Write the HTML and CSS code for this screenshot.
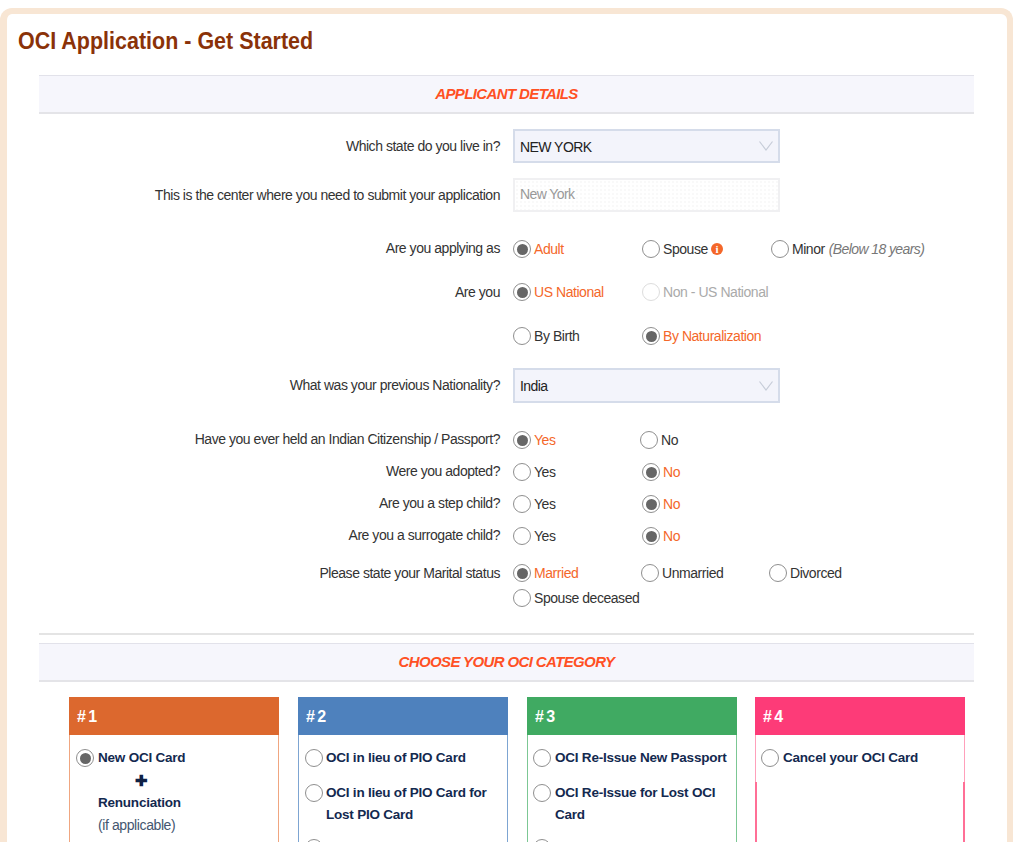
FILE: index.html
```html
<!DOCTYPE html>
<html lang="en">
<head>
<meta charset="utf-8">
<title>OCI Application - Get Started</title>
<link rel="stylesheet" href="styles.css">
</head>
<body>
<main class="shell">
  <h1 class="title"><span>OCI Application - Get Started</span></h1>
  <section class="content">
    <h2 class="bar">APPLICANT DETAILS</h2>
    <div class="form">
      <div class="row h-select flat"><div class="label">Which state do you live in?</div><div class="select low"><span>NEW YORK</span><svg class="chev" viewBox="0 0 14 10"><path d="M.5.5 7 9 13.500.5"/></svg></div></div>
      <div class="row h-center flat"><div class="label">This is the center where you need to submit your application</div><div class="readonly">New York</div></div>
      <div class="row h-as"><div class="label">Are you applying as</div><div class="opts">
        <label class="opt on"><i class="radio"></i>Adult</label>
        <label class="opt"><i class="radio"></i>Spouse <b class="info">i</b></label>
        <label class="opt"><i class="radio"></i>Minor <em class="note">(Below 18 years)</em></label>
      </div></div>
      <div class="row h-nat flat"><div class="label">Are you</div><div class="opts">
        <label class="opt on"><i class="radio"></i>US National</label>
        <label class="opt off"><i class="radio"></i>Non - US National</label>
      </div></div>
      <div class="row h-nat2"><div class="label"></div><div class="opts">
        <label class="opt"><i class="radio"></i>By Birth</label>
        <label class="opt on"><i class="radio"></i>By Naturalization</label>
      </div></div>
      <div class="row h-prev"><div class="label">What was your previous Nationality?</div><div class="select"><span>India</span><svg class="chev" viewBox="0 0 14 10"><path d="M.5.5 7 9 13.500.5"/></svg></div></div>
      <div class="row h-q1"><div class="label">Have you ever held an Indian Citizenship / Passport?</div><div class="opts">
        <label class="opt on w127"><i class="radio"></i>Yes</label>
        <label class="opt"><i class="radio"></i>No</label>
      </div></div>
      <div class="row h-q"><div class="label">Were you adopted?</div><div class="opts">
        <label class="opt"><i class="radio"></i>Yes</label>
        <label class="opt on"><i class="radio"></i>No</label>
      </div></div>
      <div class="row h-q"><div class="label">Are you a step child?</div><div class="opts">
        <label class="opt"><i class="radio"></i>Yes</label>
        <label class="opt on"><i class="radio"></i>No</label>
      </div></div>
      <div class="row h-q"><div class="label">Are you a surrogate child?</div><div class="opts">
        <label class="opt"><i class="radio"></i>Yes</label>
        <label class="opt on"><i class="radio"></i>No</label>
      </div></div>
      <div class="row h-mar flat"><div class="label">Please state your Marital status</div><div class="opts">
        <label class="opt on w128"><i class="radio"></i>Married</label>
        <label class="opt w128"><i class="radio"></i>Unmarried</label>
        <label class="opt"><i class="radio"></i>Divorced</label>
      </div></div>
      <div class="row h-mar2"><div class="label"></div><div class="opts">
        <label class="opt wide"><i class="radio"></i>Spouse deceased</label>
      </div></div>
    </div>
    <hr class="rule">
    <h2 class="bar">CHOOSE YOUR OCI CATEGORY</h2>
    <div class="cards">
      <article class="card c1">
        <header># 1</header>
        <div class="items">
          <label class="item on"><i class="radio"></i><span><strong>New OCI Card</strong><strong class="plus">✚</strong><strong>Renunciation</strong><small>(if applicable)</small></span></label>
        </div>
      </article>
      <article class="card c2">
        <header># 2</header>
        <div class="items">
          <label class="item"><i class="radio"></i><span><strong>OCI in lieu of PIO Card</strong></span></label>
          <label class="item"><i class="radio"></i><span><strong>OCI in lieu of PIO Card for Lost PIO Card</strong></span></label>
          <label class="item"><i class="radio"></i></label>
        </div>
      </article>
      <article class="card c3">
        <header># 3</header>
        <div class="items">
          <label class="item"><i class="radio"></i><span><strong>OCI Re-Issue New Passport</strong></span></label>
          <label class="item"><i class="radio"></i><span><strong>OCI Re-Issue for Lost OCI Card</strong></span></label>
          <label class="item"><i class="radio"></i></label>
        </div>
      </article>
      <article class="card c4">
        <header># 4</header>
        <div class="items">
          <label class="item"><i class="radio"></i><span><strong>Cancel your OCI Card</strong></span></label>
        </div>
      </article>
    </div>
  </section>
</main>
</body>
</html>
```

FILE: styles.css
```css
* { box-sizing: border-box; }
html, body { margin: 0; height: 842px; overflow: hidden; background: #fff; }
body { font-family: "Liberation Sans", Arial, sans-serif; font-size: 14px; color: #333; }
.shell {
  margin: 8px 11px 0 0;
  height: 834px;
  border: 6px solid #f8e6d4;
  border-left-width: 7px;
  border-bottom: 0;
  border-radius: 12px 12px 0 0;
  background: #fff;
  overflow: hidden;
}
.title {
  margin: 0;
  padding: 12px 0 0 11px;
  height: 61px;
  font-size: 24px;
  line-height: 30px;
  font-weight: 700;
  color: #8a3208;
}
.title span { display: inline-block; transform: scaleX(.895); transform-origin: left center; white-space: nowrap; }
.content { margin: 0 33px 0 32px; }
.bar {
  margin: 0;
  height: 39px;
  border-top: 1px solid #e2e2ea;
  border-bottom: 2px solid #e4e4e8;
  background: #f6f6fc;
  text-align: center;
  font-size: 15px;
  line-height: 35px;
  font-style: italic;
  font-weight: 700;
  color: #ff5024;
  letter-spacing: -.62px;
}
.form { display: flex; flex-direction: column; }
.row { display: flex; align-items: center; }
.label {
  width: 461px;
  text-align: right;
  letter-spacing: -.46px;
  color: #333;
  flex: none;
  margin-top: -2px;
}
.flat .label { margin-top: 0; }
.h-select { height: 34px; margin-top: 15px; }
.h-center { height: 34px; margin-top: 15px; }
.h-as { height: 22px; margin-top: 26px; }
.h-nat { height: 22px; margin-top: 21px; }
.h-nat2 { height: 22px; margin-top: 22px; }
.h-prev { height: 35px; margin-top: 21px; }
.h-q1 { height: 22px; margin-top: 26px; }
.h-q { height: 22px; margin-top: 10px; }
.h-mar { height: 22px; margin-top: 15px; }
.h-mar2 { height: 22px; margin-top: 3px; }
.select, .readonly {
  margin-left: 13px;
  width: 267px;
  height: 100%;
  display: flex;
  align-items: center;
  justify-content: space-between;
  padding: 0 5px;
}
.select {
  background: #f3f4fb;
  border: 2px solid #d5dcea;
  color: #222;
  letter-spacing: -.55px;
}
.select.low span { padding-top: 2px; }
.readonly {
  background: #fff radial-gradient(#f1f1f1 .6px, transparent .8px) 0 0 / 4px 4px;
  border: 2px solid #f0f0f2;
  padding-bottom: 2px;
  color: #999;
  letter-spacing: -.6px;
}
.chev { width: 14px; height: 10px; fill: none; stroke: #c6ccd8; stroke-width: 1.2; }
.opts { margin-left: 13px; display: flex; align-items: center; }
.opt {
  width: 129px;
  display: flex;
  align-items: center;
  gap: 3px;
  letter-spacing: -.45px;
  color: #333;
  white-space: nowrap;
}
.opt.w127 { width: 127px; }
.opt.w128 { width: 128px; }
.opt.wide { width: auto; }
.opt.on { color: #f4672a; }
.opt.off { color: #aaa; }
.radio {
  flex: none;
  width: 18px;
  height: 18px;
  border-radius: 50%;
  border: 1.5px solid #8f8f8f;
  background: #fff;
  position: relative;
}
.on > .radio::after {
  content: "";
  position: absolute;
  inset: 2.5px;
  border-radius: 50%;
  background: #666;
}
.off > .radio { border-color: #ddd; }
.info {
  display: inline-block;
  width: 12px;
  height: 12px;
  border-radius: 50%;
  background: #f4672a;
  color: #fff;
  font: 700 11px/12px "Liberation Serif", serif;
  text-align: center;
}
.note { color: #777; margin-left: 1px; letter-spacing: -.6px; }
.rule { margin: 24px 0 8px; border: 0; border-top: 2px solid #e4e4e4; height: 2px; }
.cards { display: flex; padding: 15px 0 0 30px; gap: 19px; }
.card { width: 210px; height: 300px; border: 1px solid; flex: none; position: relative; }
.card header {
  height: 38px;
  margin: -1px -1px 0;
  padding: 1px 8px 0;
  color: #fff;
  font-weight: 700;
  font-size: 16px;
  line-height: 38px;
  word-spacing: -2px;
}
.items { padding: 12px 6px 0; display: flex; flex-direction: column; gap: 12px; }
.item { display: flex; gap: 4px; align-items: flex-start; }
.item:nth-child(2) { margin-top: 1px; }
.item:nth-child(3) { margin-top: -1px; }
.item span { line-height: 22px; min-width: 0; }
.item strong { display: block; color: #13294f; font-size: 13.5px; letter-spacing: -.22px; }
.item small { display: block; font-size: 14px; color: #44566f; letter-spacing: -.4px; }
.item .plus { padding-left: 37px; font-size: 15px; line-height: 23px; color: #0f2145; }
.item .radio { margin-top: 2px; }
.c1 { border-color: #f0a680; }
.c1 header { background: #dc682e; }
.c2 { border-color: #7da5d2; }
.c2 header { background: #4e81bd; }
.c2 .item { gap: 3px; }
.c3 { border-color: #7cc794; }
.c3 header { background: #40aa62; }
.c3 .items, .c4 .items { padding-left: 5px; }
.c4 { margin-left: -1px; border-color: #ffa0bb; }
.c4 header { background: #fd3b78; }
.c4::after {
  content: "";
  position: absolute;
  top: 84px;
  bottom: 0;
  left: -1px;
  right: -1px;
  border-left: 2px solid #ff6f96;
  border-right: 2px solid #ff6f96;
}
```
